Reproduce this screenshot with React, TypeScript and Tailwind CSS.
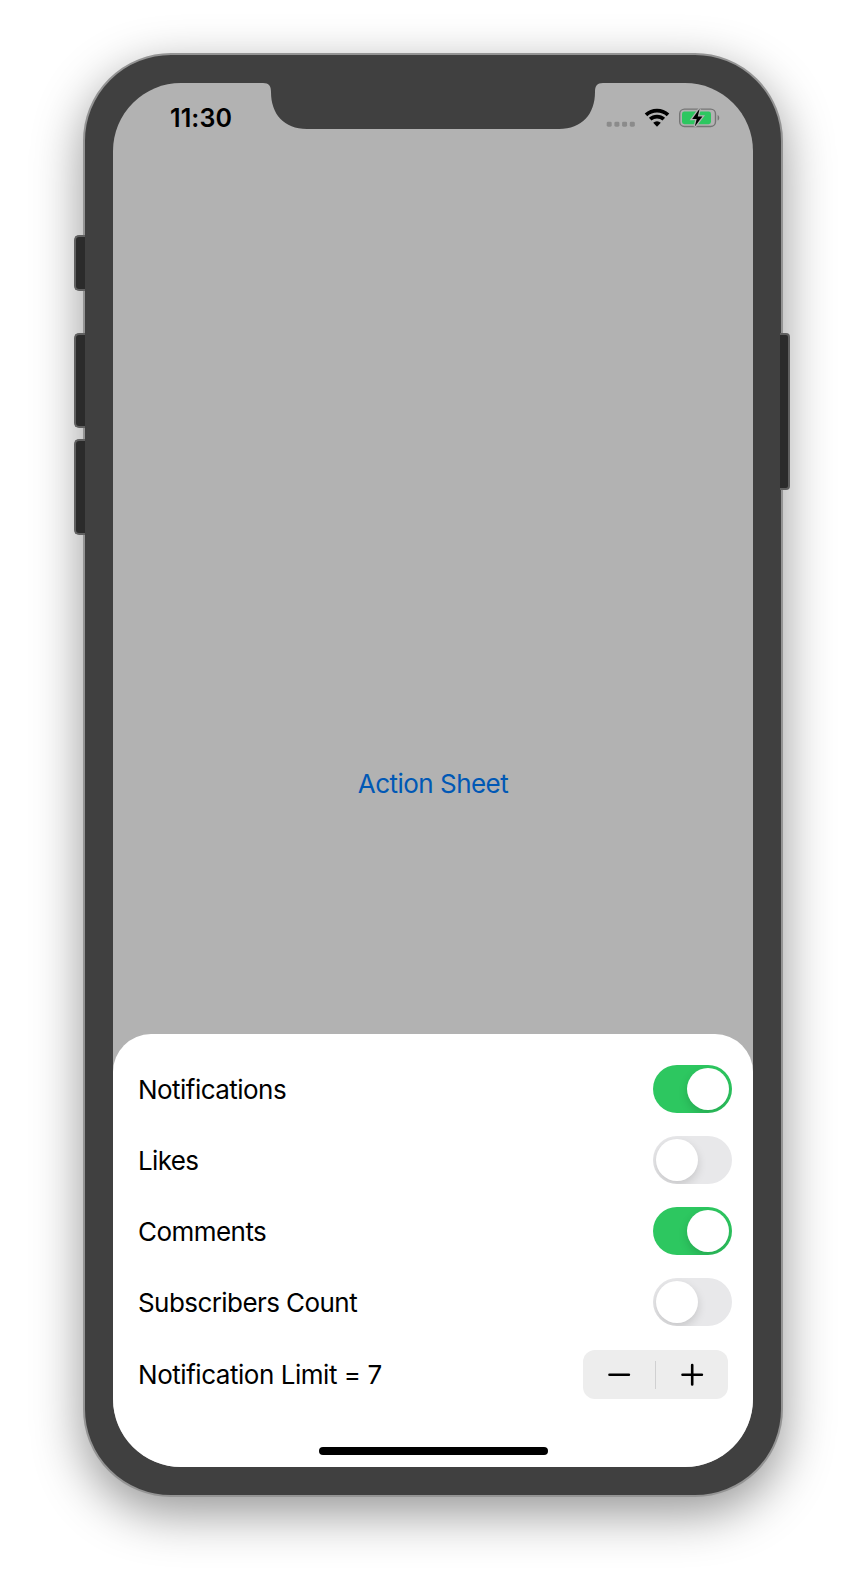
type SwitchProps = { on: boolean };

function Switch({ on }: SwitchProps) {
  return (
    <button
      type="button"
      role="switch"
      aria-checked={on}
      className={
        on
          ? "flex h-12 w-[79px] items-center justify-end overflow-hidden rounded-full bg-[#2dc760] px-[3px]"
          : "flex h-12 w-[79px] items-center justify-start overflow-hidden rounded-full bg-[#e8e8ea] px-[3px]"
      }
    >
      <span className="size-[42px] rounded-full bg-white shadow-[0_4px_10px_rgba(0,0,0,0.15)]" />
    </button>
  );
}

function StatusIcons() {
  return (
    <svg viewBox="0 0 120 30" className="h-[30px] w-[120px]">
      <g fill="#8b8b8b">
        <rect x="6.7" y="21.7" width="5" height="5" rx="1.4" />
        <rect x="14.4" y="21.7" width="5" height="5" rx="1.4" />
        <rect x="22.1" y="21.7" width="5" height="5" rx="1.4" />
        <rect x="29.8" y="21.7" width="5" height="5" rx="1.4" />
      </g>
      <g fill="none" stroke="#000" strokeWidth="3.8">
        <path d="M46 14.8a16.3 16.3 0 0 1 22 0" />
        <path d="M50.2 19.2a10 10 0 0 1 13.6 0" />
      </g>
      <path d="M53.2 22.7a5.5 5.5 0 0 1 7.6 0L57 26.8Z" />
      <rect x="79.7" y="9.1" width="35.8" height="17.4" rx="4.8" fill="none" stroke="#757575" strokeWidth="1.4" />
      <path d="M117.6 15c2.2.8 2.2 4.8 0 5.6Z" fill="#757575" />
      <rect x="82" y="11.6" width="29" height="12.6" rx="2.4" fill="#2dc760" />
      <path
        d="M99.6 8.8 92.2 18.9h4.5l-1.9 7.6 7.6-10h-4.6Z"
        fill="#000"
        stroke="#b2b2b2"
        strokeWidth="2.6"
        paintOrder="stroke"
      />
    </svg>
  );
}

const settings = [
  { label: "Notifications", on: true, tracking: "tracking-[-0.54px]" },
  { label: "Likes", on: false, tracking: "tracking-[-0.62px]" },
  { label: "Comments", on: true, tracking: "tracking-[-0.54px]" },
  { label: "Subscribers Count", on: false, tracking: "tracking-[-0.57px]" },
];

export default function App() {
  return (
    <main className="relative h-[1582px] w-[866px] overflow-hidden bg-white pt-[53px] pl-[83px] font-['Inter',sans-serif]">
      <div className="relative h-[1444px] w-[700px] rounded-[88px] border-2 border-[#949494] bg-[#404040] p-7 shadow-[0_16px_50px_rgba(0,0,0,0.42)]">
        <section className="flex h-[1384px] w-[640px] flex-col overflow-hidden rounded-[68px] bg-[#b2b2b2]">
          <header className="flex h-[47px] shrink-0 items-start">
            <div className="w-[150px] pt-[19px] pl-[57px] text-[25px] leading-[32px] font-semibold tracking-[0.1px]">11:30</div>
            <svg viewBox="0 0 340 47" className="h-[47px] w-[340px] shrink-0">
              <path d="M0 0C6 0 8 3 8 9C8 31 21 46 44 46H296C319 46 332 31 332 9C332 3 334 0 340 0Z" fill="#404040" />
            </svg>
            <div className="-ml-[3px] pt-[17px]">
              <StatusIcons />
            </div>
          </header>
          <div className="flex flex-1 flex-col items-center pt-[638px]">
            <button type="button" className="text-[26px] leading-[32px] tracking-[-0.52px] text-[#0058b5]">Action Sheet</button>
          </div>
          <div className="flex h-[433px] shrink-0 flex-col rounded-t-[38px] bg-white pt-5 pr-[21.5px] pl-[25px]">
            {settings.map((s) => (
              <div key={s.label} className="flex h-[71px] items-center justify-between">
                <span className={`text-[26px] leading-[32px] whitespace-nowrap ${s.tracking}`}>{s.label}</span>
                <span className="pb-px">
                  <Switch on={s.on} />
                </span>
              </div>
            ))}
            <div className="flex h-[73px] items-center justify-between pr-[3.5px]">
              <span className="text-[26px] leading-[32px] tracking-[-0.46px] whitespace-nowrap">Notification Limit = 7</span>
              <div className="flex h-[49px] w-[145px] items-center rounded-xl bg-[#ededed]">
                <button type="button" aria-label="Decrease" className="flex flex-1 justify-center">
                  <svg viewBox="0 0 24 24" className="size-6" stroke="#000" strokeWidth="2.6" strokeLinecap="round">
                    <path d="M2.5 11.8h19.4" />
                  </svg>
                </button>
                <span className="h-7 w-px bg-[#d0d0d1]" />
                <button type="button" aria-label="Increase" className="flex flex-1 justify-center">
                  <svg viewBox="0 0 24 24" className="size-6" stroke="#000" strokeWidth="2.6" strokeLinecap="round">
                    <path d="M2.5 11.7h19.4M12.2 2v19.4" />
                  </svg>
                </button>
              </div>
            </div>
            <div className="mt-9 ml-[180.5px] h-2 w-[229px] rounded-full bg-black" />
          </div>
        </section>
      </div>
      <span className="absolute top-[235px] left-[74px] h-14 w-[11px] rounded-l-[5px] border-2 border-r-0 border-[#606060] bg-[#2b2b2b]" />
      <span className="absolute top-[333px] left-[74px] h-[95px] w-[11px] rounded-l-[5px] border-2 border-r-0 border-[#606060] bg-[#2b2b2b]" />
      <span className="absolute top-[439px] left-[74px] h-[96px] w-[11px] rounded-l-[5px] border-2 border-r-0 border-[#606060] bg-[#2b2b2b]" />
      <span className="absolute top-[333px] left-[780px] h-[157px] w-[10px] rounded-r-[4px] border-2 border-l-0 border-[#606060] bg-[#2b2b2b]" />
    </main>
  );
}
